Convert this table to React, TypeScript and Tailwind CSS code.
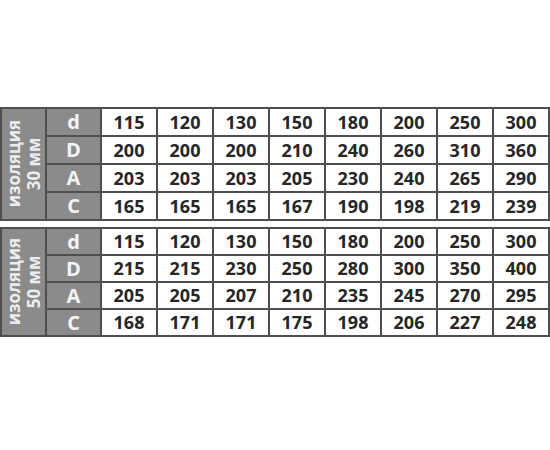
import React from 'react';

interface SizeTable {
  thickness: string;
  rows: { label: string; values: number[] }[];
  rowHeight: string;
}

const tables: SizeTable[] = [
  {
    thickness: '30 мм',
    rowHeight: 'grid-rows-[repeat(4,26px)]',
    rows: [
      { label: 'd', values: [115, 120, 130, 150, 180, 200, 250, 300] },
      { label: 'D', values: [200, 200, 200, 210, 240, 260, 310, 360] },
      { label: 'A', values: [203, 203, 203, 205, 230, 240, 265, 290] },
      { label: 'C', values: [165, 165, 165, 167, 190, 198, 219, 239] },
    ],
  },
  {
    thickness: '50 мм',
    rowHeight: 'grid-rows-[repeat(4,25px)]',
    rows: [
      { label: 'd', values: [115, 120, 130, 150, 180, 200, 250, 300] },
      { label: 'D', values: [215, 215, 230, 250, 280, 300, 350, 400] },
      { label: 'A', values: [205, 205, 207, 210, 235, 245, 270, 295] },
      { label: 'C', values: [168, 171, 171, 175, 198, 206, 227, 248] },
    ],
  },
];

const Table = ({ table }: { table: SizeTable }) => (
  <div
    className={`grid w-[550px] grid-cols-[43px_53px_repeat(8,54px)] ${table.rowHeight} gap-[2px] bg-[#4f4f4f] p-[2px]`}
  >
    <div className="row-span-4 flex items-center justify-center bg-[#8b8b8b]">
      <div className="rotate-180 text-center text-[17px] font-bold leading-[20px] text-[#ededed] [writing-mode:vertical-rl]">
        <div>изоляция</div>
        <div>{table.thickness}</div>
      </div>
    </div>
    {table.rows.map((row) => (
      <React.Fragment key={row.label}>
        <div className="flex items-center justify-center bg-[#8b8b8b] text-[20px] font-bold text-[#f4f4f4]">
          {row.label}
        </div>
        {row.values.map((v, i) => (
          <div
            key={i}
            className="flex items-center justify-center bg-white text-[18px] font-bold text-[#262626]"
          >
            {v}
          </div>
        ))}
      </React.Fragment>
    ))}
  </div>
);

export default function App() {
  return (
    <div className="h-[450px] w-[550px] bg-white pt-[107px] font-['Open_Sans','Liberation_Sans',sans-serif]">
      <div className="flex flex-col gap-[6px]">
        {tables.map((t) => (
          <Table key={t.thickness} table={t} />
        ))}
      </div>
    </div>
  );
}
